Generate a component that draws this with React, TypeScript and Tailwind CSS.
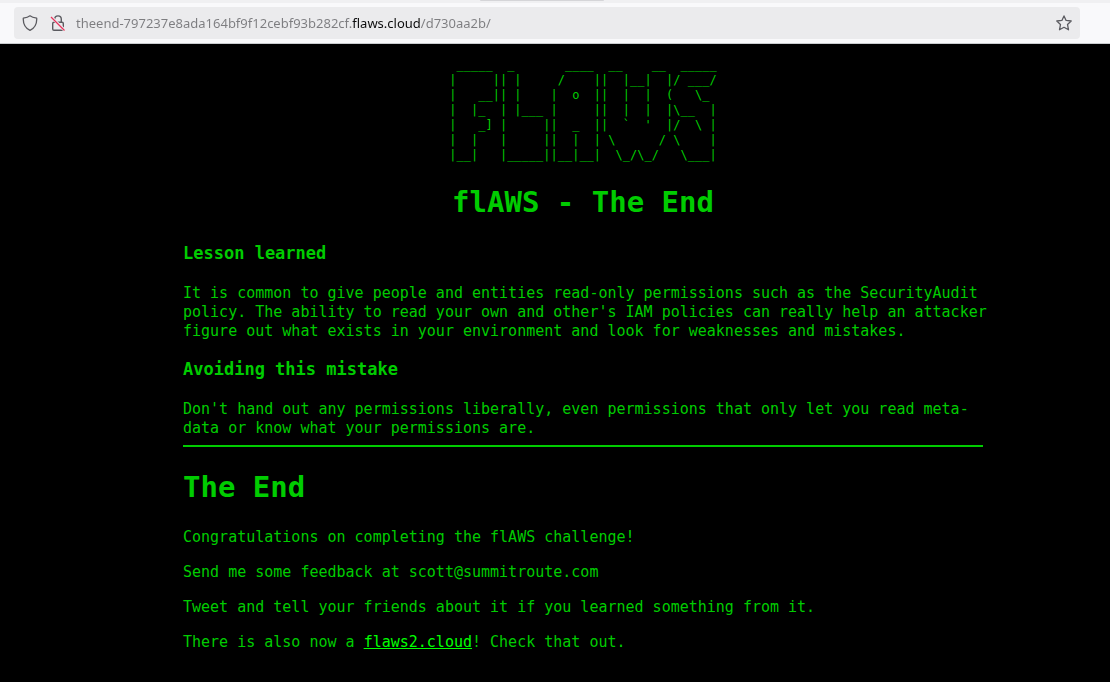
const banner = String.raw` _____  _       ____  __    __  _____
|     || |     /    ||  |__|  |/ ___/
|   __|| |    |  o  ||  |  |  (   \_ 
|  |_  | |___ |     ||  |  |  |\__  |
|   _] |     ||  _  ||  ${'`'}  '  |/  \ |
|  |   |     ||  |  | \      / \    |
|__|   |_____||__|__|  \_/\_/   \___|`;

function ShieldIcon() {
  return (
    <svg viewBox="0 0 16 16" className="size-4" fill="none" stroke="#5b5b60" strokeWidth="1.3" strokeLinejoin="round">
      <path d="M8 .8 C6.500 2 4 2.800 1.300 3.200 C1 8.500 3 13 8 15.400 C13 13 15 8.500 14.700 3.200 C12 2.800 9.500 2 8 .8Z" />
    </svg>
  );
}

function InsecureIcon() {
  return (
    <svg viewBox="0 0 16 16" className="size-4" fill="none" stroke="#5b5b60" strokeWidth="1.4">
      <rect x="2.700" y="7.200" width="10.600" height="8" rx="1.300" />
      <path d="M4.700 7V4.200a3.300 3.300 0 0 1 6.600 0V7" />
      <path d="M1 1.700 15 15.700" stroke="#ebebed" strokeWidth="3" />
      <path d="M1 2 14.500 15.500" stroke="#e8345c" strokeWidth="1.300" />
    </svg>
  );
}

function StarIcon() {
  return (
    <svg viewBox="0 0 16 16" className="size-4" fill="none" stroke="#5b5b60" strokeWidth="1.300" strokeLinejoin="round">
      <path d="M8 .9 10.100 5.400 15.200 6 11.500 9.400 12.500 14.800 8 12.300 3.500 14.800 4.500 9.400 .8 6 5.900 5.400Z" />
    </svg>
  );
}

function AddressBar() {
  return (
    <header className="border-b border-[#c9cccf] bg-[#f9f9fb]">
      <div className="flex h-[3px] justify-center bg-[#f0f0f2] pr-[26px]">
        <div className="h-px w-[124px] rounded-b bg-[#d5d5d8]" />
      </div>
      <div className="pt-1 pr-[30px] pb-1 pl-[14px]">
        <div className="flex h-8 items-center rounded bg-[#ebebed] px-2">
          <button type="button" aria-label="Tracking protection">
            <ShieldIcon />
          </button>
          <button type="button" aria-label="Connection is not secure" className="ml-3">
            <InsecureIcon />
          </button>
          <input
            type="text"
            aria-label="Address"
            defaultValue="theend-797237e8ada164bf9f12cebf93b282cf.flaws.cloud/d730aa2b/"
            className="ml-[10px] h-6 min-w-0 flex-1 bg-[linear-gradient(to_right,#7d7d80_276px,#0c0c0d_276px,#0c0c0d_344px,#7d7d80_344px)] bg-clip-text font-['Noto_Sans',sans-serif] text-[13px] text-[#7d7d80] outline-none [-webkit-text-fill-color:transparent]"
          />
          <button type="button" aria-label="Bookmark this page">
            <StarIcon />
          </button>
        </div>
      </div>
    </header>
  );
}

export default function App() {
  return (
    <div className="flex min-h-screen flex-col bg-black">
      <AddressBar />
      <main className="flex-1 pl-14 font-['DejaVu_Sans_Mono',monospace] text-[15px] leading-[19px] text-[#00cc00]">
        <div className="mx-auto max-w-[800px] pt-[14px] pb-7">
          <pre className="mx-auto w-fit font-['DejaVu_Sans_Mono',monospace] text-[12px] leading-[15px]">{banner}</pre>
          <h1 className="mt-[19px] text-center text-[29px] leading-10 font-bold">flAWS - The End</h1>
          <h3 className="mt-5 text-[17px] leading-[22px] font-bold">Lesson learned</h3>
          <p className="mt-5 -mr-2">
            It is common to give people and entities read-only permissions such as the SecurityAudit policy. The ability
            to read your own and other's IAM policies can really help an attacker figure out what exists in your
            environment and look for weaknesses and mistakes.
          </p>
          <h3 className="mt-[17px] text-[17px] leading-[22px] font-bold">Avoiding this mistake</h3>
          <p className="mt-5 -mr-2">
            Don't hand out any permissions liberally, even permissions that only let you read meta-data or know what
            your permissions are.
          </p>
          <hr className="mt-[7px] border-t-2 border-[#00cc00]" />
          <h1 className="mt-5 text-[29px] leading-10 font-bold">The End</h1>
          <p className="mt-[21px]">Congratulations on completing the flAWS challenge!</p>
          <p className="mt-4">Send me some feedback at scott@summitroute.com</p>
          <p className="mt-4">Tweet and tell your friends about it if you learned something from it.</p>
          <p className="mt-4">
            There is also now a{' '}
            <a href="http://flaws2.cloud" className="text-[#00ff00] underline">
              flaws2.cloud
            </a>
            ! Check that out.
          </p>
        </div>
      </main>
    </div>
  );
}
